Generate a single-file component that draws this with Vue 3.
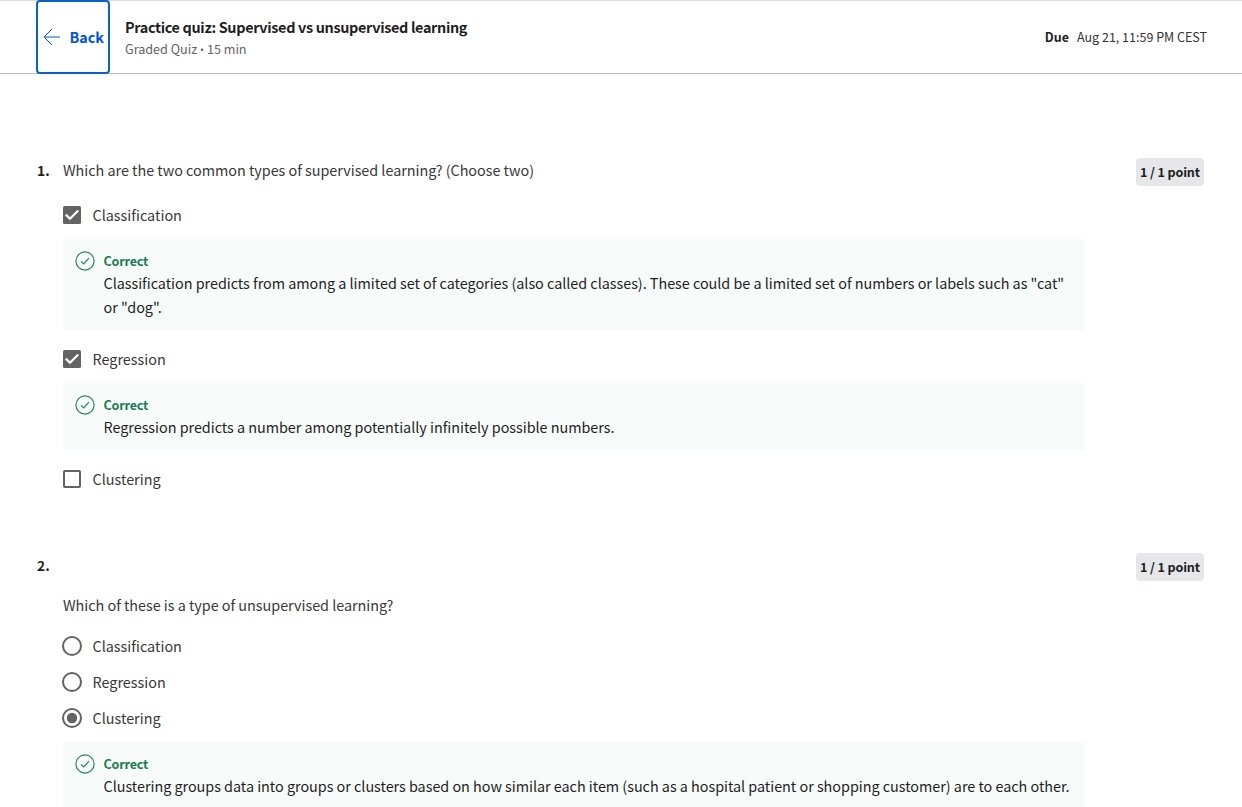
<script setup>
const questions = [
  {
    id: 1,
    prompt: 'Which are the two common types of supervised learning? (Choose two)',
    kind: 'checkbox',
    options: [
      {
        label: 'Classification',
        checked: true,
        feedback:
          'Classification predicts from among a limited set of categories (also called classes). These could be a limited set of numbers or labels such as "cat" or "dog".'
      },
      {
        label: 'Regression',
        checked: true,
        feedback: 'Regression predicts a number among potentially infinitely possible numbers.'
      },
      { label: 'Clustering', checked: false }
    ]
  },
  {
    id: 2,
    prompt: 'Which of these is a type of unsupervised learning?',
    kind: 'radio',
    options: [
      { label: 'Classification', checked: false },
      { label: 'Regression', checked: false },
      {
        label: 'Clustering',
        checked: true,
        feedback:
          'Clustering groups data into groups or clusters based on how similar each item (such as a hospital patient or shopping customer) are to each other.'
      }
    ]
  }
]
</script>

<template>
  <div class="page">
    <header class="topbar">
      <button class="back">
        <svg class="arrow" width="18" height="18" viewBox="0 0 18 18" fill="none">
          <path d="M17 9H1M9 1L1 9L9 17" stroke="currentColor" />
        </svg>
        <span>Back</span>
      </button>
      <div class="heading">
        <h1>Practice quiz: Supervised vs unsupervised learning</h1>
        <p>Graded Quiz <span class="bullet">•</span> 15 min</p>
      </div>
      <div class="due"><b>Due</b><span>Aug 21, 11:59 PM CEST</span></div>
    </header>

    <main>
      <section v-for="q in questions" :key="q.id" class="question" :class="q.kind">
        <div class="number">{{ q.id }}.</div>
        <div class="body">
          <p class="prompt">{{ q.prompt }}</p>
          <template v-for="o in q.options" :key="o.label">
            <div class="option">
              <svg v-if="q.kind === 'checkbox'" class="control" width="20" height="20" viewBox="0 0 20 20" fill="none">
                <template v-if="o.checked">
                  <rect x="1" y="1" width="18" height="18" rx="1.5" fill="#636363" />
                  <path d="M3.8 9.6L8 13.7L16.2 5.5" stroke="#fff" stroke-width="2.2" />
                </template>
                <rect v-else x="2" y="2" width="16" height="16" rx="1" stroke="#636363" stroke-width="2" />
              </svg>
              <svg v-else class="control" width="20" height="20" viewBox="0 0 20 20" fill="none">
                <circle cx="10" cy="10" r="9" stroke="#636363" stroke-width="2" />
                <circle v-if="o.checked" cx="10" cy="10" r="5.2" fill="#636363" />
              </svg>
              <span class="label">{{ o.label }}</span>
            </div>
            <div v-if="o.feedback" class="feedback">
              <svg class="tick" width="20" height="20" viewBox="0 0 20 20" fill="none" stroke="currentColor">
                <circle cx="10" cy="10" r="9.1" stroke-width="1.15" />
                <path d="M6 10.3L8.7 13L14 7.2" stroke-width="1.15" />
              </svg>
              <div class="feedback-text">
                <strong>Correct</strong>
                <p>{{ o.feedback }}</p>
              </div>
            </div>
          </template>
        </div>
        <div class="points">1 / 1 point</div>
      </section>
    </main>
  </div>
</template>

<style>
html,
body {
  overflow: hidden;
}
</style>

<style scoped>
.page {
  box-sizing: border-box;
  height: 807px;
  overflow: hidden;
  background: #fff;
  color: #1f1f1f;
  font-family: "Noto Sans CJK SC", "Open Sans", sans-serif;
  font-size: 14.4px;
  line-height: 24px;
}
h1,
p {
  margin: 0;
}
.topbar {
  box-sizing: border-box;
  height: 74px;
  padding: 0 35px 0 36px;
  display: flex;
  border-top: 1px solid #dadada;
  border-bottom: 1px solid #bdbdbd;
  box-shadow: 0 2px 3px #f5f7f7;
}
.back {
  box-sizing: border-box;
  width: 74px;
  height: 74px;
  margin-top: -1px;
  padding: 0 4px 0 5px;
  border: 2px solid #0a62c4;
  border-radius: 4px;
  background: #fff;
  color: #0056d2;
  display: flex;
  align-items: center;
  justify-content: space-between;
  font: bold 14.4px/24px "Noto Sans CJK SC", sans-serif;
  flex: none;
}
.heading {
  margin: 15px 0 0 15px;
}
h1 {
  font-size: 14.4px;
  line-height: 22px;
  font-weight: bold;
  letter-spacing: -0.33px;
}
.heading p {
  font-size: 12.6px;
  line-height: 20px;
  margin-top: 1px;
  color: #636363;
}
.bullet {
  font-family: "Open Sans", sans-serif;
  font-size: 11px;
  line-height: 1;
}
.due {
  margin: 26px 0 0 auto;
  display: flex;
  gap: 8px;
  font-size: 12.5px;
  line-height: 20px;
}
.due span {
  color: #333;
}
main {
  padding: 84px 38px 0 37px;
}
.question {
  display: grid;
  grid-template-columns: 26px 1022px auto;
  justify-content: start;
  height: 395px;
}
.number {
  font-weight: bold;
  font-size: 13.8px;
  line-height: 24px;
}
.prompt {
  line-height: 24px;
  padding-bottom: 2px;
}
.prompt,
.feedback p {
  letter-spacing: -0.03px;
}
.prompt,
.label {
  color: #383838;
}
.radio .prompt {
  margin-top: 40px;
}
.option {
  height: 24px;
  margin-top: 19px;
  margin-left: -1px;
  display: flex;
  align-items: center;
  gap: 10.5px;
}
.radio .option {
  margin-top: 12px;
}
.radio .prompt + .option {
  margin-top: 15px;
}
.feedback {
  box-sizing: border-box;
  background: #f7fbf9;
  padding: 12px 14px 12px 12px;
  margin-top: 12px;
  margin-bottom: -3px;
  display: flex;
  gap: 8.5px;
}
.tick {
  color: #1f8354;
  flex: none;
}
.feedback-text {
  margin-top: -1px;
}
.feedback strong {
  display: block;
  color: #1d7c50;
  font-size: 12.6px;
  line-height: 21px;
  letter-spacing: -0.2px;
}
.points {
  box-sizing: border-box;
  width: 68px;
  height: 28px;
  margin: 0 0 0 51px;
  background: #e5e7e8;
  border-radius: 4px;
  text-align: center;
  font-weight: bold;
  font-size: 12.6px;
  letter-spacing: -0.15px;
  line-height: 28px;
  white-space: nowrap;
}
</style>
